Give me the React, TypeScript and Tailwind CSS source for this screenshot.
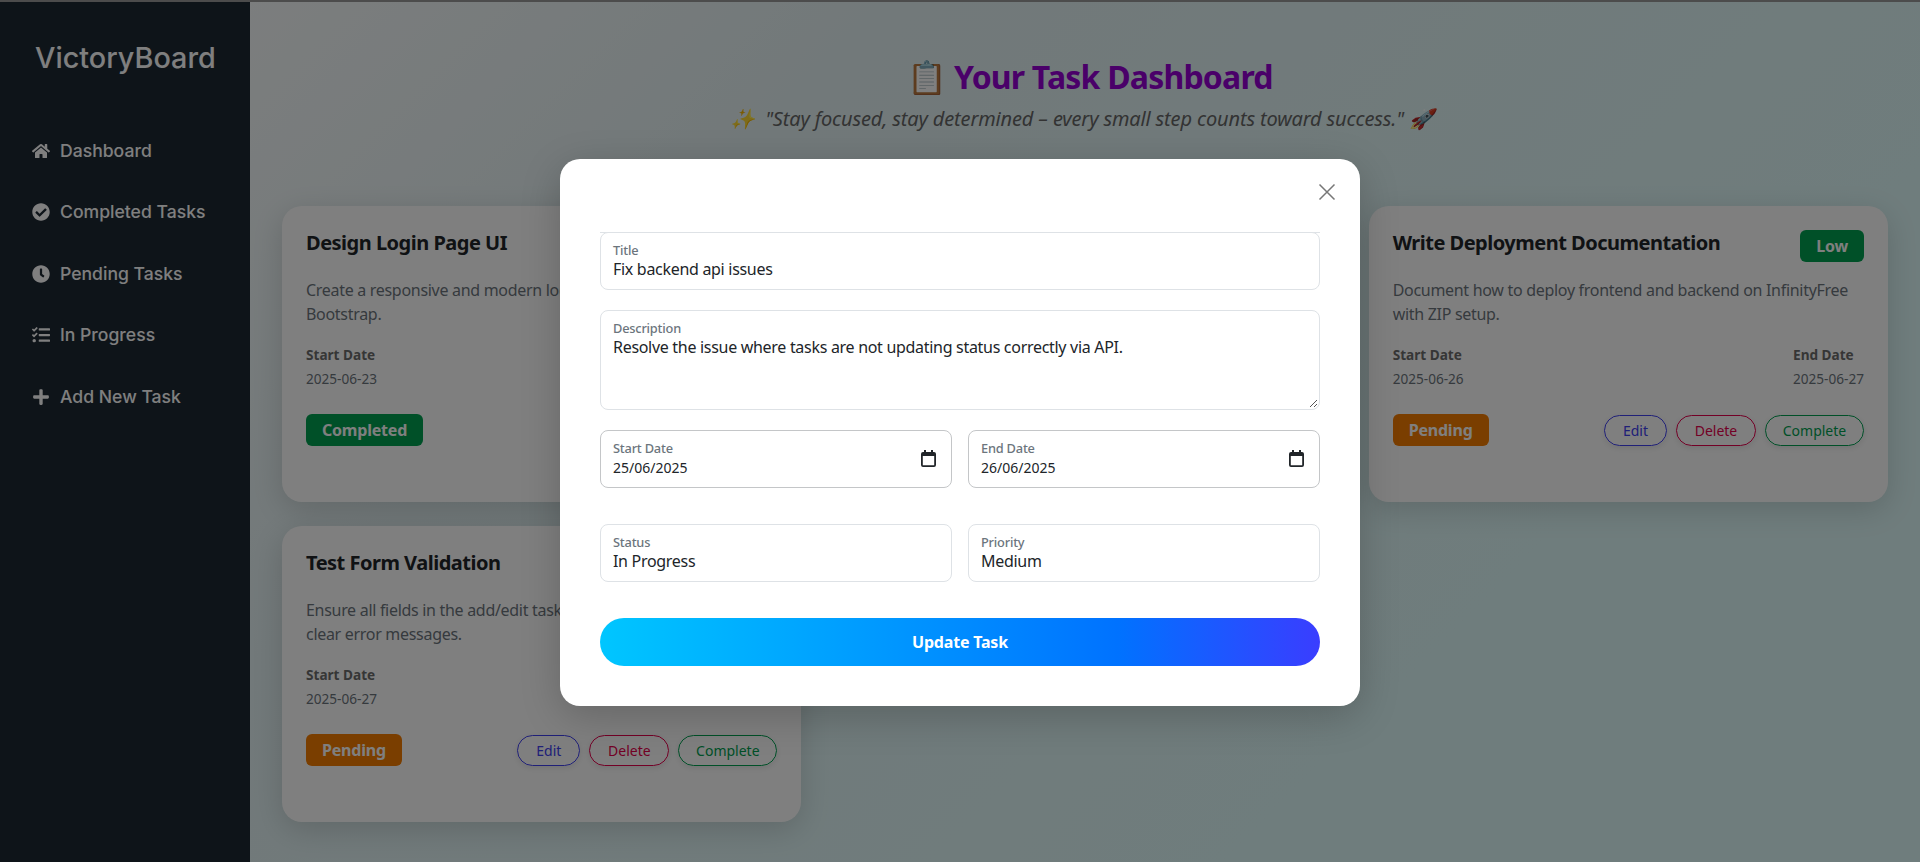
import { FaHome, FaCheckCircle, FaClock, FaTasks, FaPlus } from "react-icons/fa";

const ui = "font-['Noto_Sans','Open_Sans',sans-serif]";

function Card({ title, desc, start, end, status, priority, actions }: { title: string; desc: string; start: string; end: string; status: string; priority: string; actions: boolean }) {
  const statusColor = status === "Completed" ? "bg-[#00a050]" : "bg-[#f57c00]";
  const prioColor = priority === "Low" ? "bg-[#00a050]" : "bg-[#dc3545]";
  return (
    <div className="h-[296px] rounded-[20px] bg-white p-6 shadow-[0_8px_30px_rgba(0,0,0,0.15)]">
      <div className="flex items-start justify-between">
        <h5 className="pt-[1px] text-[20px] leading-6 font-bold tracking-[-0.5px] text-[#212529]">{title}</h5>
        <span className={`flex h-8 items-center rounded-[6px] px-4 text-[16px] font-bold tracking-[-0.2px] text-white ${prioColor}`}>{priority}</span>
      </div>
      <p className="mt-4 text-[16px] leading-6 tracking-[-0.3px] text-[#6c757d]">{desc}</p>
      <div className="mt-[17px] flex justify-between text-[13.6px] leading-6">
        <div>
          <div className="font-bold text-[#6c6c6c]">Start Date</div>
          <div className="text-[#6c757d]">{start}</div>
        </div>
        <div>
          <div className="font-bold text-[#6c6c6c]">End Date</div>
          <div className="text-[#6c757d]">{end}</div>
        </div>
      </div>
      <div className="mt-[23px] flex items-center justify-between">
        <span className={`flex h-8 items-center rounded-[6px] px-4 text-[16px] font-bold tracking-[-0.2px] text-white ${statusColor}`}>{status}</span>
        {actions && (
          <div className="flex gap-[9px] text-[14px]">
            <span className="flex h-[31px] w-[63px] items-center justify-center rounded-full border border-[#4040f0] text-[#4040f0] shadow-[0_2px_6px_rgba(0,0,0,0.1)]">Edit</span>
            <span className="flex h-[31px] w-[80px] items-center justify-center rounded-full border border-[#e6004c] text-[#e6004c] shadow-[0_2px_6px_rgba(0,0,0,0.1)]">Delete</span>
            <span className="flex h-[31px] w-[99px] items-center justify-center rounded-full border border-[#00a050] text-[#00a050] shadow-[0_2px_6px_rgba(0,0,0,0.1)]">Complete</span>
          </div>
        )}
      </div>
    </div>
  );
}

function CalIcon() {
  return (
    <svg width="15" height="17" viewBox="0 0 15 17" className="text-[#212529]">
      <path fill="currentColor" d="M3 0h2v2h5V0h2v2h1a2 2 0 0 1 2 2v11a2 2 0 0 1-2 2H2a2 2 0 0 1-2-2V4a2 2 0 0 1 2-2h1V0zM1.8 6v9c0 .2 0 .3.2.3h11c.2 0 .2-.1.2-.3V6H1.8z" />
    </svg>
  );
}

function Field({ label, value, tall, date, dark }: { label: string; value: string; tall?: boolean; date?: boolean; dark?: boolean }) {
  return (
    <div className={`relative flex rounded-[8px] border pt-[9px] pl-[12px] ${date ? "pr-[15px]" : "pr-[12px]"} ${tall ? "h-[100px]" : "h-[58px]"} ${dark ? "border-[#c4c6c8]" : "border-[#dee2e6]"} items-start justify-between bg-white`}>
      <div>
        <div className="text-[12.8px] leading-4 font-medium tracking-[-0.2px] text-[#6c757d]">{label}</div>
        <div className={`${date ? "mt-[2px] text-[14px]" : "mt-[1px] text-[16px] tracking-[-0.3px]"} leading-5 text-[#212529]`}>{value}</div>
      </div>
      {date && <div className="mt-[10px]"><CalIcon /></div>}
      {tall && (
        <svg width="9" height="9" viewBox="0 0 9 9" className="absolute right-[1px] bottom-[1px] text-[#555]">
          <path d="M1 8L8 1M5 8L8 5" stroke="currentColor" strokeWidth="1" />
        </svg>
      )}
    </div>
  );
}

export default function App() {
  const nav = [
    [FaHome, "Dashboard"],
    [FaCheckCircle, "Completed Tasks"],
    [FaClock, "Pending Tasks"],
    [FaTasks, "In Progress"],
    [FaPlus, "Add New Task"],
  ] as const;
  return (
    <div className={`relative flex h-screen w-full overflow-hidden bg-[linear-gradient(135deg,#ffffff,#e4f2f4_33%,#dffafa_75%)] ${ui}`}>
      <aside className="w-[250px] shrink-0 bg-[#1c2833] px-8 pt-10 font-['Inter',sans-serif] text-white">
        <div className="pl-[3px] text-[28.8px] leading-9 font-medium">VictoryBoard</div>
        <nav className="mt-[59px] flex flex-col gap-[30px]">
          {nav.map(([Icon, label]) => (
            <div key={label} className="flex h-[31.5px] items-center gap-[10px] text-[17.6px] font-medium">
              <Icon className="h-[18px] w-[18px]" />
              <span>{label}</span>
            </div>
          ))}
        </nav>
      </aside>
      <main className="min-w-0 flex-1 px-8 pt-[57px]">
        <h1 className="pl-[10px] text-center text-[32px] leading-10 font-bold tracking-[-0.8px] text-[#9400d3]">📋 Your Task Dashboard</h1>
        <p className="mt-[6px] pr-[6px] text-center text-[20px] leading-8 tracking-[-0.14px] text-[#666] italic">✨{"\u00a0\u00a0"}"Stay focused, stay determined – every small step counts toward success."{"\u00a0"}🚀</p>
        <div className="mt-[71px] grid grid-cols-3 gap-6">
          <Card title="Design Login Page UI" desc="Create a responsive and modern login page using React and Bootstrap." start="2025-06-23" end="2025-06-24" status="Completed" priority="High" actions={false} />
          <Card title="Fix backend api issues" desc="Resolve the issue where tasks are not updating status correctly via API." start="2025-06-25" end="2025-06-26" status="In Progress" priority="Medium" actions={true} />
          <Card title="Write Deployment Documentation" desc="Document how to deploy frontend and backend on InfinityFree with ZIP setup." start="2025-06-26" end="2025-06-27" status="Pending" priority="Low" actions={true} />
          <Card title="Test Form Validation" desc="Ensure all fields in the add/edit task form show validation and clear error messages." start="2025-06-27" end="2025-06-28" status="Pending" priority="Medium" actions={true} />
        </div>
      </main>
      <div className="absolute inset-0 flex items-center justify-center bg-black/50 pt-[2px]">
        <div className="w-[800px] rounded-[20px] bg-white px-10 pb-10 shadow-[0_10px_40px_rgba(0,0,0,0.2)]">
          <div className="flex h-[74px] items-start justify-end border-b border-[#dee2e6] pt-[24px]">
            <svg width="18" height="18" viewBox="0 0 18 18" className="mr-[-16px]">
              <path d="M1.5 1.5L16.5 16.5M16.5 1.5L1.5 16.5" stroke="#777" strokeWidth="1.5" />
            </svg>
          </div>
          <div className="-mt-px flex flex-col">
            <Field label="Title" value="Fix backend api issues" />
            <div className="mt-[20px]"><Field label="Description" value="Resolve the issue where tasks are not updating status correctly via API." tall /></div>
            <div className="mt-[20px] grid grid-cols-2 gap-4">
              <Field label="Start Date" value="25/06/2025" date dark />
              <Field label="End Date" value="26/06/2025" date dark />
            </div>
            <div className="mt-[36px] grid grid-cols-2 gap-4">
              <Field label="Status" value="In Progress" />
              <Field label="Priority" value="Medium" />
            </div>
            <div className="mt-[36px] flex h-12 items-center justify-center rounded-full bg-[linear-gradient(90deg,#00c6ff,#0072ff_72%,#3a3dff)] text-[16px] font-bold tracking-[-0.2px] text-white">Update Task</div>
          </div>
        </div>
      </div>
      <div className="absolute inset-x-0 top-0 h-[2px] bg-[#4c4c4c]" />
    </div>
  );
}
